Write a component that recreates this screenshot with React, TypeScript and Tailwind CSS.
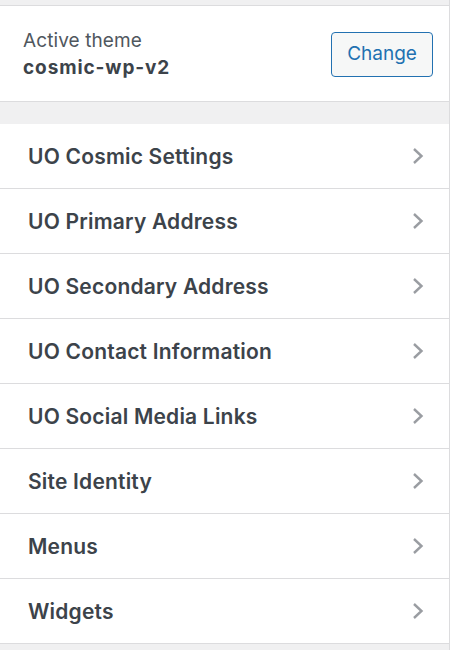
import React from "react";

const items = [
  "UO Cosmic Settings",
  "UO Primary Address",
  "UO Secondary Address",
  "UO Contact Information",
  "UO Social Media Links",
  "Site Identity",
  "Menus",
  "Widgets",
];

function Chevron() {
  return (
    <svg width="12" height="18" viewBox="0 0 12 18" fill="none">
      <path d="M2 2 L9.5 9 L2 16" stroke="#9a9da2" strokeWidth="2.4" strokeLinecap="butt" strokeLinejoin="miter" />
    </svg>
  );
}

export default function App() {
  return (
    <div
      className="w-[451px] h-[650px] bg-[#f0f0f1] flex overflow-hidden"
      style={{ fontFamily: "Inter, 'Noto Sans', sans-serif" }}
    >
      <div className="w-[450px] border-r border-[#dcdcde] flex flex-col">
        <div className="h-[5px] border-b border-[#dcdcde] box-content" />
        <div className="h-[96px] bg-white border-b border-[#dcdcde] flex items-center justify-between pl-[23px] pr-[16px]">
          <div className="flex flex-col">
            <span className="text-[19px] leading-[27px] tracking-[0.1px] text-[#50575e]">Active theme</span>
            <span className="text-[19px] leading-[27px] font-bold tracking-[0.9px] text-[#3c434a]">cosmic-wp-v2</span>
          </div>
          <button className="w-[102px] h-[45px] mt-[2px] rounded-[4px] border border-[#2271b1] bg-[#f6f7f7] text-[#2271b1] text-[19px]">
            Change
          </button>
        </div>
        <div className="h-[22px]" />
        <div className="flex flex-col">
          {items.map((t) => (
            <div
              key={t}
              className="h-[65px] bg-white border-b border-[#dcdcde] flex items-center justify-between pl-[28px] pr-[25px]"
            >
              <span className="text-[21px] font-semibold tracking-[0.2px] text-[#3c434a] mt-[1px]">{t}</span>
              <Chevron />
            </div>
          ))}
        </div>
      </div>
      <div className="w-[1px] bg-white" />
    </div>
  );
}
